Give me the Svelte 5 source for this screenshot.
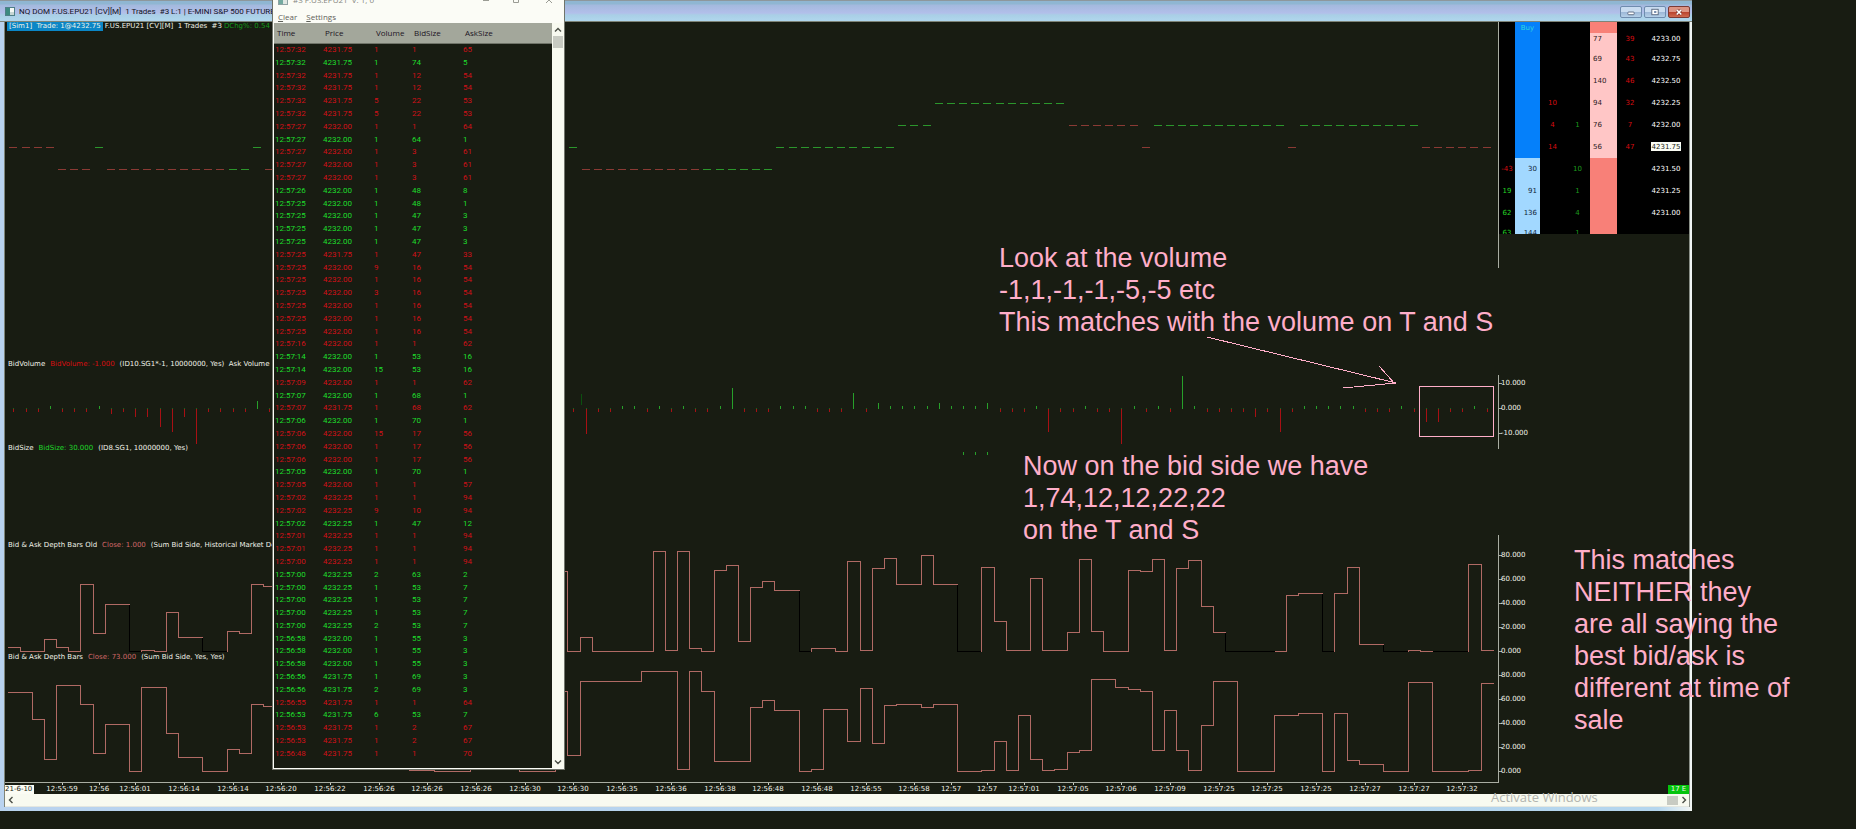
<script>
  const STEP = 12.175;
  const FIRST = 13.4;
  const barX = (i) => Math.round(FIRST + STEP * i);
  const edgeX = (i) => Math.round(FIRST - 6 + STEP * i);

  // Last traded price: [first bar, last bar, level, direction]
  const priceY = { 4231.5: 169, 4231.75: 147, 4232: 125, 4232.25: 103 };
  const priceRuns = [
    [0, 3, 4231.75, 'down'], [4, 6, 4231.5, 'down'], [7, 7, 4231.75, 'up'],
    [8, 17, 4231.5, 'down'], [18, 19, 4231.5, 'up'], [20, 20, 4231.75, 'up'],
    [21, 22, 4231.5, 'down'], [46, 46, 4231.75, 'up'], [47, 56, 4231.5, 'down'],
    [57, 62, 4231.5, 'up'], [63, 72, 4231.75, 'up'], [73, 75, 4232, 'up'],
    [76, 86, 4232.25, 'up'], [87, 92, 4232, 'down'], [93, 93, 4231.75, 'down'],
    [94, 104, 4232, 'up'], [105, 105, 4231.75, 'down'], [106, 115, 4232, 'up'],
    [116, 121, 4231.75, 'down']
  ];
  const dashes = priceRuns.flatMap(([a, b, p, dir]) =>
    Array.from({ length: b - a + 1 }, (_, k) => ({ x: barX(a + k), y: priceY[p], dir }))
  );

  const volumesLeft = [-1, -1, -1, 1, -1, -1, -1, 1, -2, -1, -3, -3, -7, -9, -3, -14, -1, -1, -1, -1, 3, -1];
  const volumesRight = [
    -1, -10, -1, -1, 1, 1, -1, 1, -1, 1, -1, -1, 1, 8, -1, -1, -1, 1, 1, 1, -1, -1, -1, 6, -1, 2, 1, 1, 1, 1,
    2, 1, 1, 1, 2, -1, -1, -1, 1, -9, -1, -1, 1, -1, -1, -14, 1, -1, 1, -1, 13, 1, -1, -1, -1, -1, -3, -1, -9,
    -1, 1, 1, 1, 1, 1, -1, -1, -1, 1, -1, -5, -5, -1, -1, 1, -1
  ];
  const volumes = [
    ...volumesLeft.map((v, i) => ({ x: barX(i), v })),
    ...volumesRight.map((v, i) => ({ x: barX(i + 46), v }))
  ];

  // Depth runs: [bar count, value]; null is a bar without data
  const depthOld = [
    [1, 3], [2, 0], [1, 10], [1, 3], [1, 0], [1, 56], [1, 15], [2, 39], [1, null], [1, 1], [1, 0], [1, 32.5],
    [2, 12], [2, null], [1, 17], [1, 15], [1, 56], [1, 54], [23, 54], [1, 67], [1, 0], [1, 12], [5, 0], [1, 83],
    [1, 1], [1, 83], [1, 2.5], [1, 0], [1, 67.5], [1, 72], [1, 8], [1, 53], [1, 58], [2, 51], [1, null],
    [2, 2.5], [1, 0], [1, 75], [1, 1], [1, 69], [1, 77.5], [2, 56], [1, 80], [2, 56], [2, null], [1, 70],
    [1, 25], [2, 1], [1, 61], [2, 1], [1, 16], [1, 77], [1, 17], [2, 0], [1, 67.5], [1, 67], [1, 77], [1, 1],
    [1, 69], [1, 76], [1, 37.5], [1, 16], [4, null], [1, 0], [1, 47], [2, 48], [1, null], [1, 48], [1, 70],
    [2, 6], [2, null], [1, 1], [1, 0], [3, null], [1, 72.5], [1, 1]
  ];
  const depthNew = [
    [2, 66], [1, 43.5], [1, 10], [2, 72], [1, 56], [1, 15], [2, 39.5], [1, 0], [2, 70], [1, 32], [2, 12],
    [2, 0], [1, 18], [1, 15], [1, 56], [1, 54], [11, 54], [2, 1], [3, 0], [4, 54], [3, 0], [1, 67], [1, 13],
    [5, 75], [3, 83], [1, 2], [1, 83], [1, 67], [3, 8.5], [1, 53], [1, 59], [2, 51], [1, 0], [1, 2], [2, 52],
    [1, 25], [1, 69.5], [1, 23], [1, 55], [2, 56], [1, 53], [2, 56], [2, 0], [1, 1], [1, 25], [1, 1], [1, 47],
    [1, 10], [1, 1], [1, 2], [1, 16], [1, 17.5], [2, 77], [1, 70], [1, 68], [1, 67], [1, 17.5], [1, 51],
    [1, 17.5], [1, 1], [1, 38], [2, 75], [3, 0], [2, 47], [2, 48.5], [1, 0], [1, 48.5], [1, 9], [2, 6],
    [2, 0], [2, 74.5], [3, 0], [1, 1], [1, 73]
  ];

  function steps(runs, zero) {
    let i = 0;
    let prev = null;
    let line = '';
    let gap = '';
    for (const [n, v] of runs) {
      const y = Math.round(zero - (v ?? 0) * 1.2);
      const part = `M${edgeX(i)} ${prev ?? y}V${y}H${edgeX(i + n)}`;
      if (v === null) gap += part;
      else line += part;
      prev = y;
      i += n;
    }
    return { line, gap };
  }
  const oldPath = steps(depthOld, 651);
  const newPath = steps(depthNew, 771);

  const times = [
    [4, '12:55:59'], [7, '12:56'], [10, '12:56:01'], [14, '12:56:14'], [18, '12:56:14'], [22, '12:56:20'],
    [26, '12:56:22'], [30, '12:56:26'], [34, '12:56:26'], [38, '12:56:26'], [42, '12:56:30'], [46, '12:56:30'],
    [50, '12:56:35'], [54, '12:56:36'], [58, '12:56:38'], [62, '12:56:48'], [66, '12:56:48'], [70, '12:56:55'],
    [74, '12:56:58'], [77, '12:57'], [80, '12:57'], [83, '12:57:01'], [87, '12:57:05'], [91, '12:57:06'],
    [95, '12:57:09'], [99, '12:57:25'], [103, '12:57:25'], [107, '12:57:25'], [111, '12:57:27'],
    [115, '12:57:27'], [119, '12:57:32']
  ];

  const volumeScale = [['10.000', 383], ['0.000', 408], ['-10.000', 433]];
  const oldScale = [['80.000', 555], ['60.000', 579], ['40.000', 603], ['20.000', 627], ['0.000', 651]];
  const newScale = [['80.000', 675], ['60.000', 699], ['40.000', 723], ['20.000', 747], ['0.000', 771]];

  // Price ladder: delta, bid, sells, buys, ask, ask delta, price
  const ladder = [
    ['', '', '', '', '77', '39', '4233.00'],
    ['', '', '', '', '69', '43', '4232.75'],
    ['', '', '', '', '140', '46', '4232.50'],
    ['', '', '10', '', '94', '32', '4232.25'],
    ['', '', '4', '1', '76', '7', '4232.00'],
    ['', '', '14', '', '56', '47', '4231.75'],
    ['-43', '30', '', '10', '', '', '4231.50'],
    ['19', '91', '', '1', '', '', '4231.25'],
    ['62', '136', '', '4', '', '', '4231.00'],
    ['63', '144', '', '1', '', '', '']
  ];

  const sales = `r 12:57:32 4231.75 1 1 65
g 12:57:32 4231.75 1 74 5
r 12:57:32 4231.75 1 12 54
r 12:57:32 4231.75 1 12 54
r 12:57:32 4231.75 5 22 53
r 12:57:32 4231.75 5 22 53
r 12:57:27 4232.00 1 1 64
g 12:57:27 4232.00 1 64 1
r 12:57:27 4232.00 1 3 61
r 12:57:27 4232.00 1 3 61
r 12:57:27 4232.00 1 3 61
g 12:57:26 4232.00 1 48 8
g 12:57:25 4232.00 1 48 1
g 12:57:25 4232.00 1 47 3
g 12:57:25 4232.00 1 47 3
g 12:57:25 4232.00 1 47 3
r 12:57:25 4231.75 1 47 33
r 12:57:25 4232.00 9 16 54
r 12:57:25 4232.00 1 16 54
r 12:57:25 4232.00 3 16 54
r 12:57:25 4232.00 1 16 54
r 12:57:25 4232.00 1 16 54
r 12:57:25 4232.00 1 16 54
r 12:57:16 4232.00 1 1 62
g 12:57:14 4232.00 1 53 16
g 12:57:14 4232.00 15 53 16
r 12:57:09 4232.00 1 1 62
g 12:57:07 4232.00 1 68 1
r 12:57:07 4231.75 1 68 62
g 12:57:06 4232.00 1 70 1
r 12:57:06 4232.00 15 17 56
r 12:57:06 4232.00 1 17 56
r 12:57:06 4232.00 1 17 56
g 12:57:05 4232.00 1 70 1
r 12:57:05 4232.00 1 1 57
r 12:57:02 4232.25 1 1 94
r 12:57:02 4232.25 9 10 94
g 12:57:02 4232.25 1 47 12
r 12:57:01 4232.25 1 1 94
r 12:57:01 4232.25 1 1 94
r 12:57:00 4232.25 1 1 94
g 12:57:00 4232.25 2 63 2
g 12:57:00 4232.25 1 53 7
g 12:57:00 4232.25 1 53 7
g 12:57:00 4232.25 1 53 7
g 12:57:00 4232.25 2 53 7
g 12:56:58 4232.00 1 55 3
g 12:56:58 4232.00 1 55 3
g 12:56:58 4232.00 1 55 3
g 12:56:56 4231.75 1 69 3
g 12:56:56 4231.75 2 69 3
r 12:56:55 4231.75 1 1 64
g 12:56:53 4231.75 6 53 7
r 12:56:53 4231.75 1 2 67
r 12:56:53 4231.75 1 2 67
r 12:56:48 4231.75 1 1 70`
    .split('\n')
    .map((l) => l.split(' '));
</script>

{#snippet scale(items, top, height)}
  {#each items as [label, y]}
    <span class="tick" style="top: {((y - top) / height) * 100}%">{label}</span>
  {/each}
{/snippet}

<main class="desktop">
  <section class="window">
    <header class="titlebar">
      <svg class="appicon" viewBox="0 0 10 9" aria-hidden="true">
        <rect x="0.5" y="0.5" width="9" height="8" fill="#f4f8f4" stroke="#4f7f88" />
        <rect x="1" y="1" width="4" height="7" fill="#3c8a80" />
        <rect x="5" y="5" width="4" height="3" fill="#c6d6d4" />
      </svg>
      <h1>NQ DOM F.US.EPU21 [CV][M]  1 Trades  #3 L:1 | E-MINI S&amp;P 500 FUTURE</h1>
      <div class="controls">
        <button aria-label="Minimize"><svg viewBox="0 0 20 11"><rect x="6.500" y="5.500" width="7" height="3" rx="1" fill="#fff" stroke="#56657c" /></svg></button>
        <button aria-label="Restore"><svg viewBox="0 0 20 11"><rect x="6.500" y="2.500" width="7" height="6" fill="#fff" stroke="#56657c" /><rect x="9" y="4.500" width="2.500" height="2" fill="#6d85a8" /></svg></button>
        <button class="close" aria-label="Close"><svg viewBox="0 0 20 11"><path d="M7.500 3L12.500 8.300M12.500 3L7.500 8.300" stroke="#7a2c22" stroke-width="3" /><path d="M7.500 3L12.500 8.300M12.500 3L7.500 8.300" stroke="#fff" stroke-width="1.800" /></svg></button>
      </div>
    </header>

    <div class="client">
      <div class="charts">
        <section class="panel">
          <div class="plot">
            <svg viewBox="5 22 1493 338" preserveAspectRatio="none" aria-hidden="true">
              {#each dashes as d}
                <rect x={d.x - 4} y={d.y} width="8" height="1" class={d.dir} />
              {/each}
            </svg>
            <p class="caption top"><span class="trade">[Sim1]  Trade: 1@4232.75</span><span>F.US.EPU21 [CV][M]  1 Trades  #3</span><span class="green dim">DChg%: 0.54</span></p>
          </div>
          <div class="axis">
            <svg viewBox="1498 22 191 338" preserveAspectRatio="none" aria-hidden="true"><path d="M1498.500 22V268" /></svg>
            <div class="dom">
              <table aria-label="Price ladder">
                <thead><tr><th></th><th class="bid">Buy</th><th></th><th></th><th class="ask"></th><th></th><th></th></tr></thead>
                <tbody>
                  {#each ladder as row, i}
                    <tr>
                      <td class:neg={row[0].startsWith('-')} class="delta">{row[0]}</td>
                      <td class="bid" class:lit={i > 5}>{row[1]}</td>
                      <td class="sold">{row[2]}</td>
                      <td class="bought">{row[3]}</td>
                      <td class="ask" class:lit={i < 6}>{row[4]}</td>
                      <td class="sold">{row[5]}</td>
                      <td class="price"><span class:last={row[6] === '4231.75'}>{row[6]}</span></td>
                    </tr>
                  {/each}
                </tbody>
              </table>
            </div>
          </div>
        </section>

        <section class="panel">
          <div class="plot">
            <svg viewBox="5 360 1493 84" preserveAspectRatio="none" aria-hidden="true">
              <rect x="581" y="394" width="1" height="11" fill="#0b500f" />
              {#each volumes as { x, v }}
                {#if v > 0}
                  <rect {x} y={408 - v * 2.5} width="1" height={v * 2.5 + 1} fill="#27a02a" />
                {:else}
                  <rect {x} y="408" width="1" height="1" fill="#186a1c" />
                  <rect {x} y="409" width="1" height={-v * 2.5} fill="#a81014" />
                {/if}
              {/each}
            </svg>
            <p class="caption"><span>BidVolume</span><span class="red">BidVolume: -1.000</span><span>(ID10.SG1*-1, 10000000, Yes)  Ask Volume</span></p>
          </div>
          <div class="axis">
            <svg viewBox="1498 360 191 84" preserveAspectRatio="none" aria-hidden="true"><path d="M1498.500 375V444M1498 383.500h4M1498 408.500h4M1498 433.500h4" /></svg>
            {@render scale(volumeScale, 360, 84)}
          </div>
        </section>

        <section class="panel">
          <div class="plot">
            <svg viewBox="5 444 1493 97" preserveAspectRatio="none" aria-hidden="true">
              {#each [78, 79, 80] as i}
                <rect x={barX(i)} y="452" width="1" height="3" fill="#27a02a" />
              {/each}
            </svg>
            <p class="caption"><span>BidSize</span><span class="green">BidSize: 30.000</span><span>(ID8.SG1, 10000000, Yes)</span></p>
          </div>
          <div class="axis">
            <svg viewBox="1498 444 191 97" preserveAspectRatio="none" aria-hidden="true"><path d="M1498.500 444V449M1498.500 535V541" /></svg>
          </div>
        </section>

        <section class="panel">
          <div class="plot">
            <svg viewBox="5 541 1493 112" preserveAspectRatio="none" aria-hidden="true">
              <g transform="translate(0.5 0.5)"><path class="gap" d={oldPath.gap} /><path class="step" d={oldPath.line} /></g>
            </svg>
            <p class="caption"><span>Bid &amp; Ask Depth Bars Old</span><span class="rose">Close: 1.000</span><span>(Sum Bid Side, Historical Market De</span></p>
          </div>
          <div class="axis">
            <svg viewBox="1498 541 191 112" preserveAspectRatio="none" aria-hidden="true"><path d="M1498.500 541V653M1498 555.500h4M1498 579.500h4M1498 603.500h4M1498 627.500h4M1498 651.500h4" /></svg>
            {@render scale(oldScale, 541, 112)}
          </div>
        </section>

        <section class="panel">
          <div class="plot">
            <svg viewBox="5 653 1493 130" preserveAspectRatio="none" aria-hidden="true">
              <g transform="translate(0.5 0.5)"><path class="step" d={newPath.line} /></g>
              <path class="base" d="M5 782.500H1498" />
            </svg>
            <p class="caption"><span>Bid &amp; Ask Depth Bars</span><span class="rose">Close: 73.000</span><span>(Sum Bid Side, Yes, Yes)</span></p>
          </div>
          <div class="axis">
            <svg viewBox="1498 653 191 130" preserveAspectRatio="none" aria-hidden="true"><path d="M1498.500 653V783M1498 675.500h4M1498 699.500h4M1498 723.500h4M1498 747.500h4M1498 771.500h4" /></svg>
            {@render scale(newScale, 653, 130)}
          </div>
        </section>
      </div>

      <div class="timeline">
        <div class="times">
          <span class="date">21-6-10</span>
          {#each times as [i, label]}
            <span class="time" style="left: {((barX(i) - 5) / 1493) * 100}%">{label}</span>
          {/each}
        </div>
        <div class="countdown"><span>17 E</span></div>
      </div>

      <div class="hscroll">
        <button aria-label="Scroll left"><svg viewBox="0 0 8 8"><path d="M5.500 1L2.500 4L5.500 7" /></svg></button>
        <span class="hthumb"></span>
        <button aria-label="Scroll right"><svg viewBox="0 0 8 8"><path d="M2.500 1L5.500 4L2.500 7" /></svg></button>
      </div>
    </div>
  </section>

  <section class="tape">
    <header>
      <svg class="appicon" viewBox="0 0 10 9" aria-hidden="true">
        <rect x="0.500" y="0.500" width="9" height="8" fill="#dfe6e2" stroke="#8fa3a4" />
        <rect x="1" y="1" width="4" height="7" fill="#74aaa0" />
      </svg>
      <h2>#3 F.US.EPU21  V: 1, 0</h2>
      <svg class="tapecontrols" viewBox="0 0 78 9" aria-hidden="true">
        <path d="M8 4.500h6M38.500 1.500h5v5h-5zM71 1l6 6M77 1l-6 6" />
      </svg>
    </header>
    <nav><a href="#clear"><u>C</u>lear</a><a href="#settings"><u>S</u>ettings</a></nav>
    <div class="list">
      <table>
        <thead><tr><th>Time</th><th>Price</th><th>Volume</th><th>BidSize</th><th>AskSize</th></tr></thead>
        <tbody>
          {#each sales as [side, ...cells]}
            <tr class={side === 'g' ? 'buy' : 'sell'}>
              {#each cells as c}<td>{c}</td>{/each}
            </tr>
          {/each}
        </tbody>
      </table>
      <div class="vscroll">
        <button aria-label="Scroll up"><svg viewBox="0 0 8 8"><path d="M1 5.500L4 2.500L7 5.500" /></svg></button>
        <span class="vthumb"></span>
        <button class="down" aria-label="Scroll down"><svg viewBox="0 0 8 8"><path d="M1 2.500L4 5.500L7 2.500" /></svg></button>
      </div>
    </div>
  </section>

  <svg class="marks" width="1500" height="450" aria-hidden="true">
    <path d="M1207 337L1396 383M1379 366L1395 384M1343 388L1396 383" />
    <rect x="1419.500" y="386.500" width="74" height="50" />
  </svg>
  <p class="note volume">Look at the volume<br />-1,1,-1,-1,-5,-5 etc<br />This matches with the volume on T and S</p>
  <p class="note bidside">Now on the bid side we have<br />1,74,12,12,22,22<br />on the T and S</p>
  <p class="note neither">This matches<br />NEITHER they<br />are all saying the<br />best bid/ask is<br />different at time of<br />sale</p>
  <p class="watermark">Activate Windows</p>
</main>

<style>
  :global(body) {
    margin: 0;
    background: #181c12;
  }
  .desktop {
    position: relative;
    height: 100vh;
    min-height: 640px;
    overflow: hidden;
    background: #181c12;
    color: #f0f2e8;
    font: 7px/9px 'DejaVu Sans', sans-serif;
  }
  h1, h2, p {
    margin: 0;
    font-weight: normal;
    white-space: pre;
  }
  button {
    padding: 0;
    border: 0;
    background: none;
  }
  svg {
    display: block;
  }
  table {
    border-collapse: collapse;
    table-layout: fixed;
  }
  th, td {
    box-sizing: border-box;
    padding: 0;
    font-weight: normal;
    text-align: left;
  }

  .window {
    display: flex;
    flex-direction: column;
    height: calc(100% - 18px);
    margin-right: 164px;
    background: linear-gradient(90deg, #b9d3ef 0, #b4d6ee 98%, #f2f6f4 100%);
  }
  .titlebar {
    display: flex;
    align-items: center;
    box-sizing: border-box;
    height: 22px;
    padding: 2px 2px 0 5px;
    gap: 4px;
    border-bottom: 1px solid #7e8478;
    background: linear-gradient(#8d979c 0 1px, #8fb6d2 1px 4px, #a3b9dd 5px, #b2bfea 13px, #a9cfe6 15px, #afd5ec 20px);
    color: #10141e;
  }
  .titlebar h1 {
    flex: 1;
    overflow: hidden;
    font: 8px/14px Roboto, sans-serif;
  }
  .appicon {
    width: 10px;
    height: 9px;
  }
  .controls {
    display: flex;
    gap: 2px;
  }
  .controls button {
    width: 22px;
    height: 12px;
    border: 1px solid #6f8cae;
    border-radius: 2px;
    box-sizing: border-box;
    background: linear-gradient(#c9dcf0 45%, #9bb6d6 50%, #b5d0e8);
  }
  .controls .close {
    border-color: #7c3a34;
    background: linear-gradient(#dd9484 45%, #b8412c 50%, #cf6a50);
  }
  .controls svg {
    width: 20px;
    height: 10px;
  }

  .client {
    flex: 1;
    display: flex;
    flex-direction: column;
    min-height: 0;
    margin: 0 2px 4px 4px;
    border-left: 1px solid #7e8478;
    border-right: 1px solid #8a9088;
    background: #181c12;
  }
  .charts {
    flex: 1;
    display: grid;
    grid-template-rows: 338fr 84fr 97fr 112fr 130fr;
    min-height: 0;
  }
  .panel {
    display: grid;
    grid-template-columns: 1fr 191px;
    min-height: 0;
    overflow: hidden;
  }
  .plot, .axis {
    position: relative;
    min-height: 0;
  }
  .plot > svg, .axis > svg {
    position: absolute;
    inset: 0;
    width: 100%;
    height: 100%;
    shape-rendering: crispEdges;
  }
  .axis > svg path, .base {
    fill: none;
    stroke: #a9ada2;
  }
  .up { fill: #2b962c; }
  .down { fill: #8a3a34; }
  .step, .gap {
    fill: none;
    stroke: #b06a64;
  }
  .gap { stroke: #000; }
  .caption {
    position: relative;
    display: flex;
    gap: 5px;
    padding-left: 3px;
  }
  .top {
    gap: 2px;
    padding-left: 2px;
  }
  .trade {
    padding: 0 2px;
    background: #0a86c6;
  }
  .red { color: #d80c10; }
  .green { color: #1fd62a; }
  .dim { color: #129a1a; }
  .rose { color: #cf6768; }
  .tick {
    position: absolute;
    left: 3px;
    margin-top: -4px;
  }

  .dom {
    position: relative;
    height: 212px;
    margin-left: 1px;
    overflow: hidden;
    background: #000;
  }
  .dom table { width: 190px; }
  .dom th { height: 11px; width: 26px; color: #32d6dc; }
  .dom th:nth-child(1) { width: 16px; }
  .dom th:nth-child(2) { width: 25px; }
  .dom th:nth-child(3), .dom th:nth-child(4) { width: 25px; }
  .dom th:nth-child(5) { width: 27px; }
  .dom th:nth-child(7) { width: 46px; }
  .dom td, .dom th { text-align: center; line-height: 10px; }
  .dom td { height: 22px; }
  .dom tr:first-child td { height: 15px; padding-bottom: 4px; }
  .dom tr:last-child td { padding-bottom: 4px; }
  .dom .bid { background: #0580fa; }
  .dom td.bid { padding-right: 3px; text-align: right; color: #102438; }
  .dom .bid.lit { background: #a2d8ff; }
  .dom .ask { background: #f88078; }
  .dom td.ask { padding-left: 3px; text-align: left; color: #2c181c; }
  .dom .ask.lit { background: #ffc6c6; }
  .dom .delta { color: #24d424; }
  .dom .sold, .dom .delta.neg { color: #d80c10; }
  .dom .bought { color: #1e9c1e; }
  .dom .price { color: #fff; }
  .dom .last {
    padding: 1px 1px 0;
    background: #fbfcf4;
    color: #181c12;
  }

  .timeline {
    display: grid;
    grid-template-columns: 1fr 191px;
    height: 11px;
  }
  .times { position: relative; }
  .time {
    position: absolute;
    top: 2px;
    width: 40px;
    margin-left: -20px;
    text-align: center;
  }
  .time::before {
    content: '';
    position: absolute;
    left: 20px;
    top: -2px;
    width: 1px;
    height: 2px;
    background: #c8ccc0;
  }
  .date {
    display: block;
    width: 29px;
    height: 9px;
    margin-top: 2px;
    background: #fbfcf4;
    color: #181c12;
    white-space: nowrap;
  }
  .countdown {
    display: flex;
    justify-content: flex-end;
    align-items: flex-end;
  }
  .countdown span {
    width: 21px;
    height: 9px;
    background: #04c40c;
    text-align: center;
  }
  .hscroll {
    display: flex;
    align-items: center;
    height: 13px;
    box-sizing: border-box;
    border-bottom: 1px solid #e4e7e0;
    background: #f8faf0;
  }
  .hscroll button, .vscroll button {
    display: grid;
    place-items: center;
    width: 11px;
    height: 12px;
  }
  .hscroll svg, .vscroll svg {
    width: 8px;
    height: 8px;
    fill: none;
    stroke: #4a4e46;
    stroke-width: 1.4;
  }
  .hthumb {
    width: 11px;
    height: 9px;
    margin-left: auto;
    background: #c8cbc2;
  }

  .tape {
    position: absolute;
    left: 272px;
    top: 0;
    display: flex;
    flex-direction: column;
    box-sizing: border-box;
    width: 293px;
    height: calc(100% - 59px);
    border: 1px solid #70746a;
    border-top: 0;
    background: #fbfcf6;
    color: #6e7068;
    font: 8px/12px 'Open Sans', sans-serif;
  }
  .tape header {
    display: flex;
    align-items: center;
    height: 10px;
    gap: 5px;
    padding: 0 11px 0 5px;
    margin-top: -5px;
  }
  .tape h2 {
    flex: 1;
    font-size: 8px;
    line-height: 10px;
    color: #85877f;
  }
  .tapecontrols {
    width: 78px;
    height: 9px;
    fill: none;
    stroke: #9a9c94;
  }
  .tape nav {
    display: flex;
    gap: 9px;
    height: 18px;
    padding-left: 5px;
    line-height: 24px;
  }
  .tape a {
    color: #5f615a;
    text-decoration: none;
  }
  .list {
    flex: 1;
    display: flex;
    align-items: flex-start;
    min-height: 0;
    margin: 0 0 1px 1px;
    background: #181c12;
  }
  .list table {
    flex: 1;
    height: 738px;
  }
  .list th {
    height: 20px;
    padding-left: 3px;
    border-bottom: 1px solid #6f7368;
    background: #a3a79b;
    color: #1c1424;
  }
  .list th:nth-child(1) { width: 48px; }
  .list th:nth-child(2) { width: 51px; }
  .list th:nth-child(3) { width: 38px; }
  .list th:nth-child(4) { width: 51px; }
  .list td {
    padding-left: 1px;
    font: 8px/10px Roboto, sans-serif;
  }
  .sell { color: #d01018; }
  .buy { color: #1edc2c; }
  .vscroll {
    display: flex;
    flex-direction: column;
    align-items: center;
    align-self: stretch;
    width: 12px;
    background: #f8faf0;
  }
  .vscroll button { height: 13px; }
  .vthumb {
    width: 10px;
    height: 12px;
    background: #c8cbc2;
  }
  .vscroll .down { margin-top: auto; }

  .marks {
    position: absolute;
    left: 0;
    top: 0;
    fill: none;
    stroke: #ffaec9;
    shape-rendering: crispEdges;
    pointer-events: none;
  }
  .note {
    position: absolute;
    color: #ffaec9;
    font: 27px/32px 'Liberation Sans', Arial, sans-serif;
  }
  .volume { left: 999px; top: 242px; }
  .bidside { left: 1023px; top: 450px; }
  .neither { left: 1574px; top: 544px; }
  .watermark {
    position: absolute;
    left: 1491px;
    top: 788px;
    color: #b2b4ae;
    font: 13px/19px 'Open Sans', sans-serif;
  }
</style>
